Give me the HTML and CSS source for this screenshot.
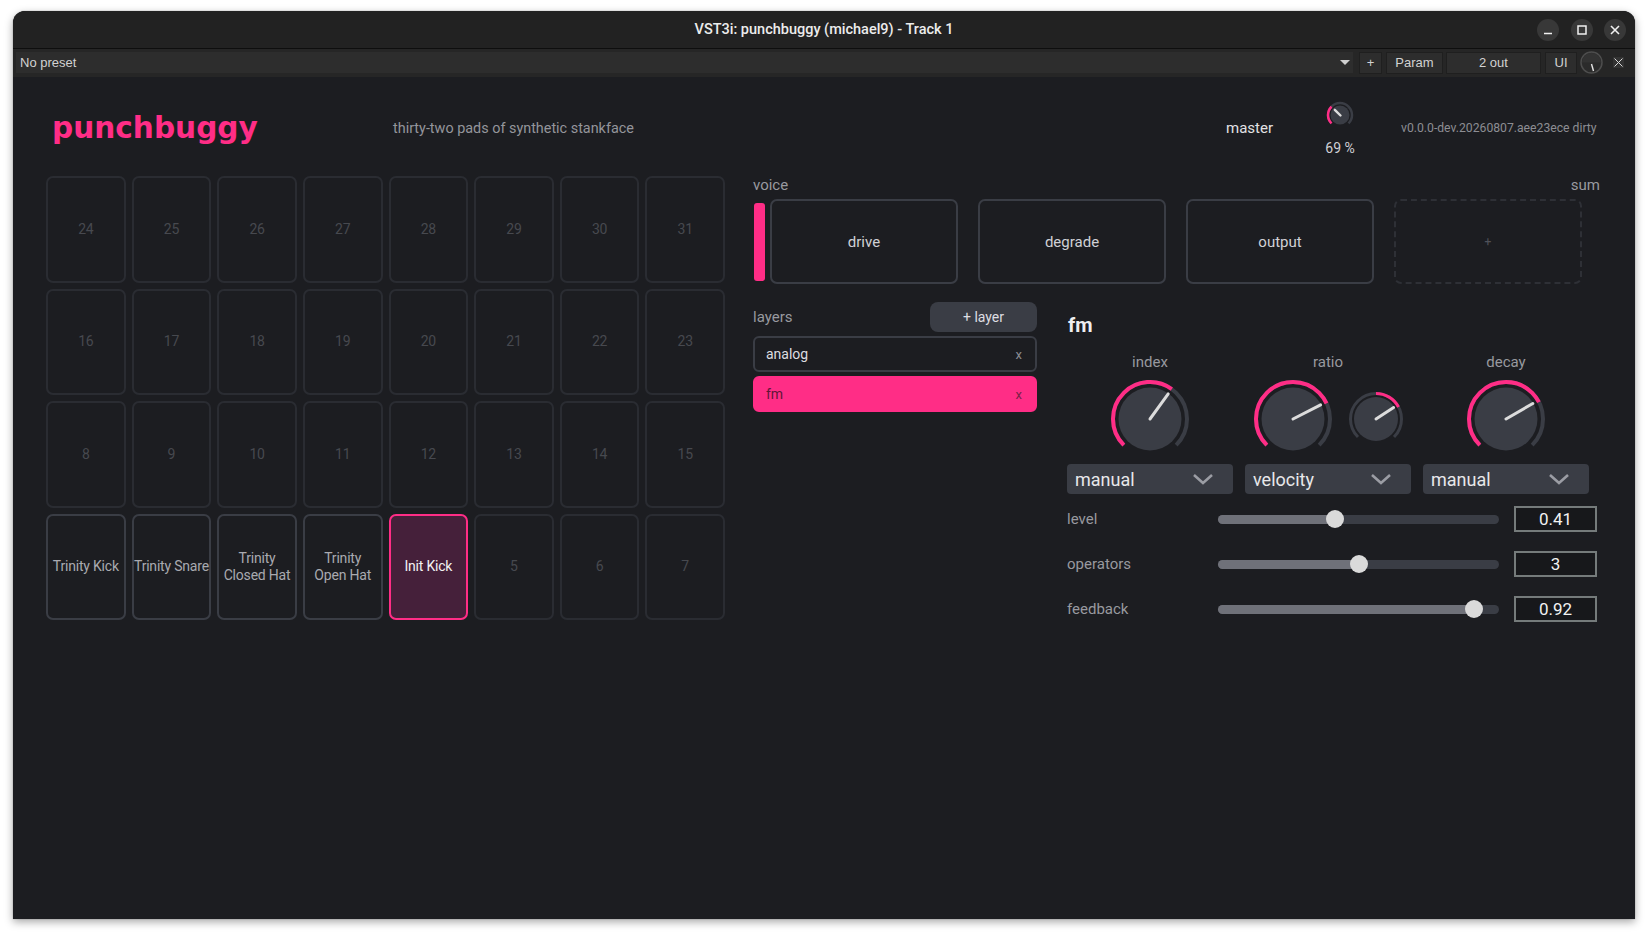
FILE: index.html
```html
<!DOCTYPE html>
<html lang="en">
<head>
  <meta charset="UTF-8">
  <title>VST3i: punchbuggy (michael9) - Track 1</title>
  <link rel="stylesheet" href="styles.css">
</head>
<body>
  <div class="window">
    <div class="titlebar">
      <span class="title">VST3i: punchbuggy (michael9) - Track 1</span>
      <div class="wm-buttons">
        <span class="wm-btn">
          <svg width="22" height="22" viewBox="0 0 22 22"><line x1="7" y1="14.5" x2="15" y2="14.5" stroke="#f0f0f0" stroke-width="1.5"/></svg>
        </span>
        <span class="wm-btn">
          <svg width="22" height="22" viewBox="0 0 22 22"><rect x="7" y="7" width="8" height="8" fill="none" stroke="#f0f0f0" stroke-width="1.5"/></svg>
        </span>
        <span class="wm-btn">
          <svg width="22" height="22" viewBox="0 0 22 22"><path d="M7 7 L15 15 M15 7 L7 15" stroke="#f0f0f0" stroke-width="1.6"/></svg>
        </span>
      </div>
    </div>

    <div class="hostbar">
      <div class="preset">
        <span>No preset</span>
        <span class="caret"></span>
      </div>
      <span class="hbtn hb-plus">+</span>
      <span class="hbtn hb-param">Param</span>
      <span class="hbtn hb-outs">2 out</span>
      <span class="hbtn hb-ui">UI</span>
      <svg class="hknob" width="23" height="23" viewBox="0 0 23 23">
        <circle cx="11.5" cy="11.5" r="10.5" fill="#2b2b2b" stroke="#4d4d4d" stroke-width="1.5"/>
        <path d="M2 11.5 A9.5 9.5 0 0 1 21 11.5" fill="#333"/>
        <line x1="11.5" y1="13" x2="13.5" y2="20" stroke="#e6e6e6" stroke-width="1.4"/>
      </svg>
      <span class="hclose">
        <svg width="11" height="11" viewBox="0 0 11 11"><path d="M1.5 1.5 L9.5 9.5 M9.5 1.5 L1.5 9.5" stroke="#d8d8d8" stroke-width="1"/></svg>
      </span>
    </div>

    <div class="plugin">
      <header class="head">
        <div class="logo">punchbuggy</div>
        <div class="tagline">thirty-two pads of synthetic stankface</div>
        <span class="master-label">master</span>
        <div class="master-knob">
          <svg width="28" height="28" viewBox="0 0 28 28">
            <circle cx="14" cy="14" r="12" fill="none" stroke="#3a3d45" stroke-width="2.5" pathLength="360" stroke-dasharray="270 360" transform="rotate(135 14 14)"/>
            <circle cx="14" cy="14" r="12" fill="none" stroke="#ff2d86" stroke-width="2.5" pathLength="360" stroke-dasharray="90 360" transform="rotate(135 14 14)"/>
            <circle cx="14" cy="14" r="9.5" fill="#3a3d45"/>
            <line x1="14.5" y1="14.5" x2="8.8" y2="8.8" stroke="#dcdcdc" stroke-width="2.4" stroke-linecap="round"/>
          </svg>
          <span class="master-value">69 %</span>
        </div>
        <div class="version">v0.0.0-dev.20260807.aee23ece dirty</div>
      </header>

      <main class="body">
        <div class="pads">
          <div class="pad">24</div><div class="pad">25</div><div class="pad">26</div><div class="pad">27</div>
          <div class="pad">28</div><div class="pad">29</div><div class="pad">30</div><div class="pad">31</div>
          <div class="pad">16</div><div class="pad">17</div><div class="pad">18</div><div class="pad">19</div>
          <div class="pad">20</div><div class="pad">21</div><div class="pad">22</div><div class="pad">23</div>
          <div class="pad">8</div><div class="pad">9</div><div class="pad">10</div><div class="pad">11</div>
          <div class="pad">12</div><div class="pad">13</div><div class="pad">14</div><div class="pad">15</div>
          <div class="pad loaded">Trinity Kick</div>
          <div class="pad loaded">Trinity Snare</div>
          <div class="pad loaded">Trinity<br>Closed Hat</div>
          <div class="pad loaded">Trinity<br>Open Hat</div>
          <div class="pad loaded active">Init Kick</div>
          <div class="pad">5</div><div class="pad">6</div><div class="pad">7</div>
        </div>

        <div class="panel">
          <div class="voice-head">
            <span>voice</span>
            <span>sum</span>
          </div>
          <div class="chain">
            <div class="chain-mark"></div>
            <div class="slot">drive</div>
            <div class="slot">degrade</div>
            <div class="slot">output</div>
            <div class="slot slot-empty">+</div>
          </div>

          <div class="lower">
            <div class="layers">
              <div class="layers-head">
                <span class="layers-title">layers</span>
                <span class="add-layer">+ layer</span>
              </div>
              <div class="layer"><span>analog</span><span class="layer-x">x</span></div>
              <div class="layer active"><span>fm</span><span class="layer-x">x</span></div>
            </div>

            <div class="engine">
              <h2 class="engine-title">fm</h2>
              <div class="knobs">
                <div class="kcol">
                  <div class="klabel">index</div>
                  <div class="kbox">
                    <svg width="80" height="80" viewBox="0 0 80 80">
                      <circle cx="40" cy="40" r="37" fill="none" stroke="#3a3d45" stroke-width="4" pathLength="360" stroke-dasharray="270 360" transform="rotate(135 40 40)"/>
                      <circle cx="40" cy="40" r="37" fill="none" stroke="#ff2d86" stroke-width="4" pathLength="360" stroke-dasharray="171 360" transform="rotate(135 40 40)"/>
                      <circle cx="40" cy="40" r="31.5" fill="#3a3d45"/>
                      <line x1="40" y1="40" x2="58.2" y2="14.9" stroke="#dcdcdc" stroke-width="3" stroke-linecap="round"/>
                    </svg>
                  </div>
                  <div class="select"><span>manual</span><svg width="22" height="12" viewBox="0 0 22 12"><path d="M2 2 L11 10 L20 2" fill="none" stroke="#9b9da4" stroke-width="2.6"/></svg></div>
                </div>
                <div class="kcol">
                  <div class="klabel">ratio</div>
                  <div class="kbox kpair">
                    <svg width="80" height="80" viewBox="0 0 80 80">
                      <circle cx="40" cy="40" r="37" fill="none" stroke="#3a3d45" stroke-width="4" pathLength="360" stroke-dasharray="270 360" transform="rotate(135 40 40)"/>
                      <circle cx="40" cy="40" r="37" fill="none" stroke="#ff2d86" stroke-width="4" pathLength="360" stroke-dasharray="200 360" transform="rotate(135 40 40)"/>
                      <circle cx="40" cy="40" r="31.5" fill="#3a3d45"/>
                      <line x1="40" y1="40" x2="67.6" y2="25.9" stroke="#dcdcdc" stroke-width="3" stroke-linecap="round"/>
                    </svg>
                    <svg width="56" height="56" viewBox="0 0 56 56">
                      <circle cx="28" cy="28" r="25.5" fill="none" stroke="#3a3d45" stroke-width="3" pathLength="360" stroke-dasharray="270 360" transform="rotate(135 28 28)"/>
                      <circle cx="28" cy="28" r="25.5" fill="none" stroke="#ff2d86" stroke-width="3" pathLength="360" stroke-dasharray="62 360" transform="rotate(-90 28 28)"/>
                      <circle cx="28" cy="28" r="22" fill="#3a3d45"/>
                      <line x1="28" y1="28" x2="45.6" y2="16.6" stroke="#dcdcdc" stroke-width="3" stroke-linecap="round"/>
                    </svg>
                  </div>
                  <div class="select"><span>velocity</span><svg width="22" height="12" viewBox="0 0 22 12"><path d="M2 2 L11 10 L20 2" fill="none" stroke="#9b9da4" stroke-width="2.6"/></svg></div>
                </div>
                <div class="kcol">
                  <div class="klabel">decay</div>
                  <div class="kbox">
                    <svg width="80" height="80" viewBox="0 0 80 80">
                      <circle cx="40" cy="40" r="37" fill="none" stroke="#3a3d45" stroke-width="4" pathLength="360" stroke-dasharray="270 360" transform="rotate(135 40 40)"/>
                      <circle cx="40" cy="40" r="37" fill="none" stroke="#ff2d86" stroke-width="4" pathLength="360" stroke-dasharray="198 360" transform="rotate(135 40 40)"/>
                      <circle cx="40" cy="40" r="31.5" fill="#3a3d45"/>
                      <line x1="40" y1="40" x2="66.8" y2="24.5" stroke="#dcdcdc" stroke-width="3" stroke-linecap="round"/>
                    </svg>
                  </div>
                  <div class="select"><span>manual</span><svg width="22" height="12" viewBox="0 0 22 12"><path d="M2 2 L11 10 L20 2" fill="none" stroke="#9b9da4" stroke-width="2.6"/></svg></div>
                </div>
              </div>

              <div class="sliders">
                <div class="srow">
                  <span class="slabel">level</span>
                  <div class="track"><div class="fill" style="width: 41.6%"></div><div class="thumb" style="left: 41.6%"></div></div>
                  <div class="value">0.41</div>
                </div>
                <div class="srow">
                  <span class="slabel">operators</span>
                  <div class="track"><div class="fill" style="width: 50%"></div><div class="thumb" style="left: 50%"></div></div>
                  <div class="value">3</div>
                </div>
                <div class="srow">
                  <span class="slabel">feedback</span>
                  <div class="track"><div class="fill" style="width: 91%"></div><div class="thumb" style="left: 91%"></div></div>
                  <div class="value">0.92</div>
                </div>
              </div>
            </div>
          </div>
        </div>
      </main>
    </div>
  </div>
</body>
</html>
```

FILE: styles.css
```css
* {
  box-sizing: border-box;
}
html, body {
  margin: 0;
  height: 100%;
}
body {
  background: #fff;
  padding: 11px 13px 15px;
  font-family: Roboto, "Liberation Sans", sans-serif;
}
.window {
  height: 908px;
  border-radius: 12px 12px 0 0;
  overflow: hidden;
  background: #1c1d21;
  box-shadow: 0 3px 9px rgba(0,0,0,0.35), 0 0 1px rgba(0,0,0,0.6);
  display: flex;
  flex-direction: column;
}

/* window chrome */
.titlebar {
  height: 38px;
  flex: none;
  background: #222;
  border-bottom: 1px solid #0e0e0e;
  display: grid;
  grid-template-columns: 1fr auto 1fr;
  align-items: center;
  padding: 0 9px;
}
.title {
  grid-column: 2;
  font-size: 14.5px;
  font-weight: 500;
  color: #ececec;
}
.wm-buttons {
  grid-column: 3;
  justify-self: end;
  display: flex;
  gap: 11.5px;
}
.wm-btn {
  width: 22px;
  height: 22px;
  border-radius: 50%;
  background: #383838;
  display: flex;
}

.hostbar {
  height: 28px;
  flex: none;
  background: #262626;
  display: flex;
  align-items: center;
  padding: 0 11px 1px 3px;
  font-family: "Liberation Sans", Arial, sans-serif;
  font-size: 13px;
  color: #d2d2d2;
}
.preset {
  flex: 1;
  height: 21px;
  background: #2d2d2d;
  display: flex;
  align-items: center;
  justify-content: space-between;
  padding: 0 3px 0 4px;
}
.caret {
  width: 0;
  height: 0;
  border-left: 5px solid transparent;
  border-right: 5px solid transparent;
  border-top: 5px solid #cfcfcf;
}
.hbtn {
  height: 22px;
  background: #2d2d2d;
  border: 1px solid #1f1f1f;
  display: flex;
  align-items: center;
  justify-content: center;
}
.hb-plus { width: 23px; margin-left: 6px; }
.hb-param { width: 57px; margin-left: 4px; }
.hb-outs { width: 95px; margin-left: 3px; }
.hb-ui { width: 32px; margin-left: 4px; }
.hknob { margin-left: 3px; }
.hclose {
  width: 11px;
  height: 11px;
  margin-left: 10px;
  background: #333;
  display: flex;
}

/* plugin */
.plugin {
  flex: 1;
  padding: 20px 35px 0 33px;
}
.head {
  height: 62px;
  display: flex;
  align-items: center;
  padding-left: 6px;
  margin-bottom: 17px;
}
.logo {
  width: 341px;
  font-family: "DejaVu Sans", sans-serif;
  font-weight: 700;
  font-size: 29.6px;
  color: #ff2d86;
}
.tagline {
  flex: 1;
  font-size: 14.4px;
  color: #94959b;
}
.master-label {
  font-size: 15px;
  color: #e2e2e4;
}
.master-knob {
  width: 44px;
  margin-left: 45px;
  display: flex;
  flex-direction: column;
  align-items: center;
  gap: 11px;
}
.master-value {
  font-size: 14px;
  line-height: 16px;
  color: #d0d0d4;
}
.version {
  width: 199px;
  margin-left: 39px;
  font-size: 12.2px;
  color: #8c8d93;
  white-space: nowrap;
}

.body {
  display: flex;
  gap: 28px;
}
.pads {
  width: 679px;
  flex: none;
  display: grid;
  grid-template-columns: repeat(8, 1fr);
  grid-auto-rows: 106.5px;
  gap: 6px;
}
.pad {
  border: 2px solid #2a2c32;
  border-radius: 7px;
  display: flex;
  align-items: center;
  justify-content: center;
  text-align: center;
  white-space: nowrap;
  font-size: 14px;
  line-height: 17px;
  letter-spacing: -0.2px;
  color: #47494f;
}
.pad.loaded {
  border-color: #3a3d45;
  color: #a9aab0;
}
.pad.active {
  border-color: #ff2d86;
  background: #45203a;
  color: #f2f2f2;
}

.panel {
  flex: 1;
}
.voice-head {
  display: flex;
  justify-content: space-between;
  font-size: 15px;
  line-height: 18px;
  color: #98999f;
}
.chain {
  display: flex;
  align-items: center;
  margin-top: 5px;
}
.chain-mark {
  width: 11px;
  height: 78px;
  margin: 0 5px 0 1px;
  border-radius: 3px;
  background: #ff2d86;
}
.slot {
  width: 188px;
  height: 85px;
  border: 2px solid #3a3d45;
  border-radius: 7px;
  display: flex;
  align-items: center;
  justify-content: center;
  font-size: 15px;
  color: #d0d1d6;
}
.slot + .slot {
  margin-left: 20px;
}
.slot-empty {
  border: 2px dashed #2e3036;
  font-size: 12px;
  color: #50525a;
}

.lower {
  display: flex;
  align-items: flex-start;
  gap: 30px;
  margin-top: 18px;
}
.layers {
  width: 284px;
}
.layers-head {
  height: 30px;
  display: flex;
  align-items: center;
  justify-content: space-between;
}
.layers-title {
  font-size: 15px;
  color: #98999f;
}
.add-layer {
  width: 107px;
  height: 30px;
  border-radius: 8px;
  background: #3a3d45;
  display: flex;
  align-items: center;
  justify-content: center;
  font-size: 14px;
  color: #dedee2;
}
.layer {
  height: 36px;
  margin-top: 4px;
  border: 2px solid #3a3d45;
  border-radius: 6px;
  display: flex;
  align-items: center;
  justify-content: space-between;
  padding: 0 13px 0 11px;
  font-size: 14px;
  color: #dcdce0;
}
.layer-x {
  font-size: 13px;
  color: #8a8b91;
}
.layer.active {
  background: #ff2d86;
  border-color: #ff2d86;
  color: #5e1638;
}
.layer.active .layer-x {
  color: #7a2148;
}

.engine {
  width: 530px;
}
.engine-title {
  margin: 11px 0 0 1px;
  font-size: 20px;
  line-height: 24px;
  font-weight: 700;
  color: #eeeef0;
}
.knobs {
  display: grid;
  grid-template-columns: repeat(3, 166px);
  column-gap: 12px;
  margin-top: 16px;
}
.kcol {
  display: flex;
  flex-direction: column;
  align-items: center;
}
.klabel {
  font-size: 15px;
  line-height: 18px;
  color: #98999f;
}
.kbox {
  height: 80px;
  margin-top: 8px;
  display: flex;
  align-items: center;
}
.kpair {
  gap: 15px;
}
.select {
  width: 100%;
  height: 30px;
  margin-top: 5px;
  border-radius: 4px;
  background: #3a3d45;
  display: flex;
  align-items: center;
  justify-content: space-between;
  padding: 0 19px 0 8px;
  font-size: 18px;
  color: #e8e8ea;
}

.sliders {
  margin-top: 12px;
}
.srow {
  height: 26px;
  display: grid;
  grid-template-columns: 136px 281px 83px;
  column-gap: 15px;
  align-items: center;
}
.srow + .srow {
  margin-top: 19px;
}
.slabel {
  font-size: 15px;
  color: #98999f;
}
.track {
  position: relative;
  height: 9px;
  border-radius: 5px;
  background: #3a3d45;
}
.fill {
  position: absolute;
  left: 0;
  top: 0;
  bottom: 0;
  border-radius: 5px;
  background: #6f7179;
}
.thumb {
  position: absolute;
  top: 50%;
  width: 18px;
  height: 18px;
  margin: -9px 0 0 -9px;
  border-radius: 50%;
  background: #dadada;
}
.value {
  height: 26px;
  border: 2px solid #757b7b;
  background: #17181b;
  display: flex;
  align-items: center;
  justify-content: center;
  font-size: 17px;
  color: #f2f2f2;
}
```
